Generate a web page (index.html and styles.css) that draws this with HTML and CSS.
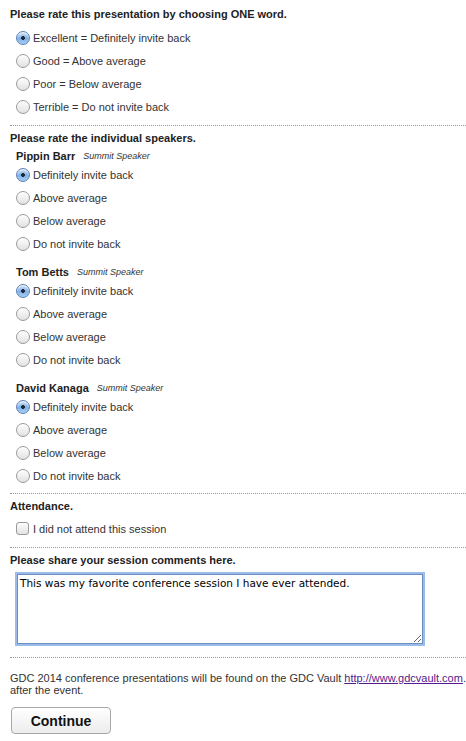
FILE: index.html
```html
<!DOCTYPE html>
<html>
<head>
<meta charset="utf-8">
<link rel="stylesheet" href="styles.css">
</head>
<body>
<form class="survey">
  <section class="block first">
    <h2 class="q">Please rate this presentation by choosing ONE word.</h2>
    <ul class="opts">
      <li><label><input type="radio" name="p" checked><span>Excellent = Definitely invite back</span></label></li>
      <li><label><input type="radio" name="p"><span>Good = Above average</span></label></li>
      <li><label><input type="radio" name="p"><span>Poor = Below average</span></label></li>
      <li><label><input type="radio" name="p"><span>Terrible = Do not invite back</span></label></li>
    </ul>
  </section>
  <section class="block speakers">
    <h2 class="q">Please rate the individual speakers.</h2>
    <div class="speaker">
      <div class="name">Pippin Barr <em>Summit Speaker</em></div>
      <ul class="opts">
        <li><label><input type="radio" name="s1" checked><span>Definitely invite back</span></label></li>
        <li><label><input type="radio" name="s1"><span>Above average</span></label></li>
        <li><label><input type="radio" name="s1"><span>Below average</span></label></li>
        <li><label><input type="radio" name="s1"><span>Do not invite back</span></label></li>
      </ul>
    </div>
    <div class="speaker">
      <div class="name">Tom Betts <em>Summit Speaker</em></div>
      <ul class="opts">
        <li><label><input type="radio" name="s2" checked><span>Definitely invite back</span></label></li>
        <li><label><input type="radio" name="s2"><span>Above average</span></label></li>
        <li><label><input type="radio" name="s2"><span>Below average</span></label></li>
        <li><label><input type="radio" name="s2"><span>Do not invite back</span></label></li>
      </ul>
    </div>
    <div class="speaker">
      <div class="name">David Kanaga <em>Summit Speaker</em></div>
      <ul class="opts">
        <li><label><input type="radio" name="s3" checked><span>Definitely invite back</span></label></li>
        <li><label><input type="radio" name="s3"><span>Above average</span></label></li>
        <li><label><input type="radio" name="s3"><span>Below average</span></label></li>
        <li><label><input type="radio" name="s3"><span>Do not invite back</span></label></li>
      </ul>
    </div>
  </section>
  <section class="block">
    <h2 class="q">Attendance.</h2>
    <ul class="opts check">
      <li><label><input type="checkbox"><span>I did not attend this session</span></label></li>
    </ul>
  </section>
  <section class="block">
    <h2 class="q">Please share your session comments here.</h2>
    <textarea class="comments">This was my favorite conference session I have ever attended.</textarea>
  </section>
  <section class="block last">
    <p class="note">GDC 2014 conference presentations will be found on the GDC Vault <a href="#">http://www.gdcvault.com</a>. after the event.</p>
    <button type="button" class="continue">Continue</button>
  </section>
</form>
</body>
</html>
```
FILE: styles.css
```css
html, body {
  margin: 0;
  padding: 0;
  background: #fff;
}
body {
  font-family: "Liberation Sans", Arial, sans-serif;
  font-size: 11px;
  color: #333;
}
.survey {
  padding-left: 10px;
}
.block {
  border-top: 1px dotted #999;
  padding-top: 5px;
  padding-bottom: 7px;
}
.block.first {
  border-top: none;
  padding-top: 7px;
}
.block.speakers {
  padding-bottom: 6px;
}
.q {
  margin: 0;
  font-size: 11px;
  line-height: 14px;
  font-weight: bold;
  color: #222;
}
.opts {
  list-style: none;
  margin: 0;
  padding: 0 0 0 6px;
}
.first .q { margin-bottom: 5px; }
.opts li {
  height: 23px;
  display: flex;
  align-items: center;
}
.opts label {
  display: flex;
  align-items: center;
  gap: 3px;
}
.opts input[type="radio"] {
  appearance: none;
  -webkit-appearance: none;
  margin: 0;
  width: 14px;
  height: 14px;
  border-radius: 50%;
  border: 1px solid #9a9a9a;
  background: linear-gradient(#fdfdfd, #e2e2e2);
  box-shadow: inset 0 1px 1px rgba(255,255,255,0.9);
  flex: none;
}
.opts input[type="radio"]:checked {
  border-color: #5a7fb6;
  background: radial-gradient(circle at 50% 50%, #1d2a3a 0 1.6px, transparent 2.2px), linear-gradient(#cfe3f8, #7fb0e6 55%, #a9d0f5);
}
.opts input[type="checkbox"] {
  appearance: none;
  -webkit-appearance: none;
  margin: 0;
  width: 13px;
  height: 13px;
  border-radius: 3px;
  border: 1px solid #9a9a9a;
  background: linear-gradient(#fdfdfd, #e2e2e2);
  flex: none;
}
.check {
  padding-top: 4px;
}
.check label { gap: 4px; }
.speaker .name {
  margin-top: 4px;
  padding-left: 6px;
  font-weight: bold;
  height: 14px;
  line-height: 14px;
  color: #222;
  display: flex;
  align-items: center;
}
.speaker + .speaker .name {
  margin-top: 10px;
}
.speaker .name em {
  font-weight: normal;
  font-size: 9px;
  line-height: 14px;
  margin-left: 8px;
  color: #333;
}
.comments {
  display: block;
  box-sizing: border-box;
  width: 406px;
  height: 70px;
  margin: 7px 0 6px 7px;
  padding: 2px 2px;
  border: 1px solid #6d8fbf;
  border-radius: 0;
  box-shadow: 0 0 0 2px rgba(122,166,224,0.75);
  outline: none;
  resize: both;
  font-family: "DejaVu Sans", sans-serif;
  font-size: 10.5px;
  line-height: 13px;
  color: #000;
}
.last {
  padding-top: 14px;
}
.note {
  margin: 0;
  line-height: 12px;
  color: #333;
}
.note a {
  color: #551a8b;
  text-decoration: underline;
}
.continue {
  display: block;
  margin-top: 11px;
  margin-left: 1px;
  width: 100px;
  height: 27px;
  border: 1px solid #a8a8a8;
  border-radius: 4px;
  background: linear-gradient(#ffffff, #ececec);
  font-family: "Liberation Sans", Arial, sans-serif;
  font-weight: bold;
  font-size: 14px;
  color: #111;
}
```
